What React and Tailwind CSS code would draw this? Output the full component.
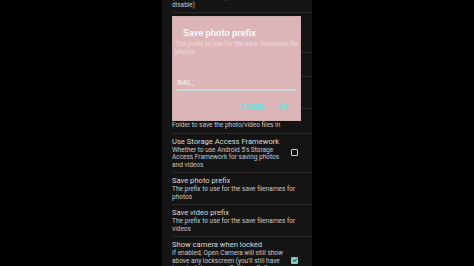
import React from 'react';

const font = { fontFamily: 'Roboto, "Noto Sans", sans-serif' };

const Pref = ({ title, lines, check }) => (
  <div className="flex items-center border-b border-[#2a2a2a] pt-[3px] pb-[3px] pr-[14px]">
    <div className="flex-1">
      <div className="text-[7.6px] leading-[10px] font-normal text-[#dadada]">{title}</div>
      {lines.map((l) => (
        <div key={l} className="text-[6.5px] leading-[7.5px] text-[#c9c9c9] whitespace-nowrap">
          {l}
        </div>
      ))}
    </div>
    {check === 'off' && (
      <div className="w-[7px] h-[7px] border border-[#cfcfcf] rounded-[1px]" />
    )}
    {check === 'on' && (
      <div className="w-[7px] h-[7px] rounded-[1px] bg-[#7fcbc3] flex items-center justify-center">
        <svg viewBox="0 0 10 10" className="w-[6px] h-[6px]">
          <path d="M2 5.2 L4.2 7.3 L8.2 2.8" fill="none" stroke="#151515" strokeWidth="1.6" />
        </svg>
      </div>
    )}
  </div>
);

export default function App() {
  return (
    <div className="w-[474px] h-[266px] bg-black flex justify-center" style={font}>
      <div className="relative w-[150px] h-full bg-[#141414] overflow-hidden">
        <div className="pl-[10px] -mt-[6px]">
          <div className="border-b border-[#2a2a2a] pb-[3px] pr-[14px]">
            <div className="text-[6.5px] leading-[7.5px] text-[#c9c9c9]">(set to 0 to disable) when</div>
            <div className="text-[6.5px] leading-[7.5px] text-[#c9c9c9]">disable)</div>
          </div>
          <Pref title="Pause after taking photo" lines={['After taking a photo, pause the', 'preview so you can keep or', 'delete the photo']} />
          <Pref title="Shutter sound" lines={['Play sound when taking a photo']} check="on" />
          <Pref title="Show toasts" lines={['Show on-screen popup info', 'messages']} check="on" />
          <Pref title="Save location" lines={['Folder to save the photo/video files in']} />
          <Pref
            title="Use Storage Access Framework"
            lines={["Whether to use Android 5's Storage", 'Access Framework for saving photos', 'and videos']}
            check="off"
          />
          <Pref title="Save photo prefix" lines={['The prefix to use for the save filenames for', 'photos']} />
          <Pref title="Save video prefix" lines={['The prefix to use for the save filenames for', 'videos']} />
          <Pref
            title="Show camera when locked"
            lines={[
              'If enabled, Open Camera will still show',
              "above any lockscreen (you'll still have",
              'to unlock to access Settings, Gallery',
              'etc)',
            ]}
            check="on"
          />
        </div>

        <div className="absolute top-[16px] left-[10px] w-[129px] h-[105px] bg-[#dbb5b8] border border-[#cfaeb0] flex flex-col">
          <div className="pl-[10px] pt-[10px] text-[9.4px] leading-[11px] font-medium text-white">Save photo prefix</div>
          <div className="pl-[2px] mt-[3px] text-[6.5px] leading-[7.5px] text-[#f2dcdd] whitespace-nowrap">
            <div>The prefix to use for the save filenames for</div>
            <div>photos</div>
          </div>
          <div className="mx-[4px] mt-[22px] text-[7.5px] leading-[9px] text-[#fbf3f3] border-b-2 border-[#cdd5d9] pb-[2px]">
            IMG_
          </div>
          <div className="flex justify-end items-center gap-[14px] pr-[13px] mt-[12px] text-[6.4px] font-bold text-[#5fe6e4] uppercase">
            <span>Cancel</span>
            <span>OK</span>
          </div>
        </div>
      </div>
    </div>
  );
}
